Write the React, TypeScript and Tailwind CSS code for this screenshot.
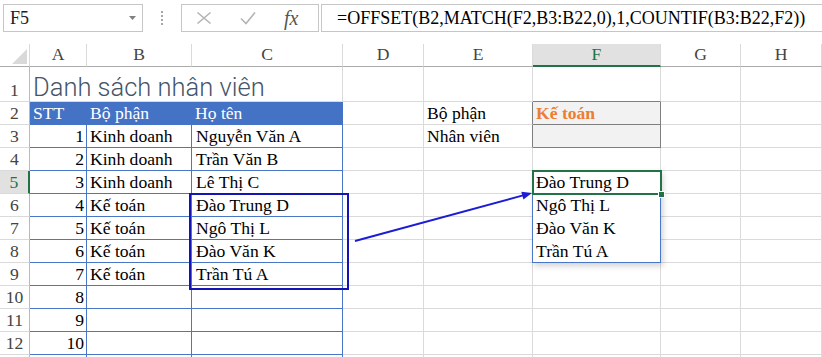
import React from "react";

const serif = "font-['Liberation_Serif',serif]";
const cell = "flex items-end pb-[1px] px-[3px] whitespace-nowrap text-[17.6px] leading-none";
const grid = "border-r border-b border-r-[#dadada] border-b-[#dadada]";
const tbl = "border-r border-b border-r-[#4a76c8] border-b-[#4a76c8]";

const people: [number, string, string][] = [
  [1, "Kinh doanh", "Nguyễn Văn A"],
  [2, "Kinh doanh", "Trần Văn B"],
  [3, "Kinh doanh", "Lê Thị C"],
  [4, "Kế toán", "Đào Trung D"],
  [5, "Kế toán", "Ngô Thị L"],
  [6, "Kế toán", "Đào Văn K"],
  [7, "Kế toán", "Trần Tú A"],
  [8, "", ""],
  [9, "", ""],
  [10, "", ""],
];

const result: Record<number, string> = {
  5: "Đào Trung D",
  6: "Ngô Thị L",
  7: "Đào Văn K",
  8: "Trần Tú A",
};

const RowHead = ({ n }: { n: number }) =>
  n === 5 ? (
    <div className="flex items-end justify-center pb-[1px] text-[17.6px] leading-none text-[#217346] bg-[#e1e1e1] border-r-2 border-b border-r-[#217346] border-b-[#dadada]">
      {n}
    </div>
  ) : (
    <div className="flex items-end justify-center pb-[1px] text-[17.6px] leading-none text-[#444] border-r border-b border-r-[#b9b9b9] border-b-[#dadada]">
      {n}
    </div>
  );

const FormulaBar = () => (
  <div className={`h-[44px] flex items-start pt-[4px] pl-[3px] ${serif}`}>
    <div className="w-[140px] h-[28px] border border-[#c6c6c6] flex items-center justify-between pl-[6px] pr-[6px]">
      <span className={`text-[18px] text-[#222] leading-none ${serif}`}>F5</span>
      <svg width="7" height="4">
        <polygon points="0,0 7,0 3.5,4" fill="#808080" />
      </svg>
    </div>
    <div className="w-[38px] h-[28px] flex flex-col items-center justify-center gap-[2px]">
      <span className="w-[2px] h-[2px] bg-[#a6a6a6]" />
      <span className="w-[2px] h-[2px] bg-[#a6a6a6]" />
      <span className="w-[2px] h-[2px] bg-[#a6a6a6]" />
      <span className="w-[2px] h-[2px] bg-[#a6a6a6]" />
    </div>
    <div className="w-[138px] h-[28px] border border-[#c6c6c6] flex items-center pl-[14px]">
      <svg width="16" height="14">
        <path d="M1.5 1.5 L14.5 12.5 M14.5 1.5 L1.5 12.5" stroke="#b4b4b4" strokeWidth="1.6" fill="none" />
      </svg>
      <svg width="16" height="14" className="ml-[28px]">
        <path d="M1 7.5 L6 12.5 L15 1.5" stroke="#b4b4b4" strokeWidth="1.6" fill="none" />
      </svg>
      <span className={`ml-[28px] italic text-[20px] leading-none text-[#555] ${serif}`}>fx</span>
    </div>
    <div
      className={`ml-[2px] flex-1 h-[28px] border border-r-0 border-[#c6c6c6] pl-[15px] flex items-center text-[18px] leading-none text-black whitespace-nowrap ${serif}`}
    >
      =OFFSET(B2,MATCH(F2,B3:B22,0),1,COUNTIF(B3:B22,F2))
    </div>
  </div>
);

const ColHeaders = () => (
  <>
    <div className="border-r border-b border-r-[#dadada] border-b-[#ababab]">
      <svg width="30" height="23">
        <polygon points="12,20 27,20 27,5" fill="#d9d9d9" />
      </svg>
    </div>
    {["A", "B", "C", "D", "E", "F", "G", "H"].map((c) =>
      c === "F" ? (
        <div
          key={c}
          className="flex items-end justify-center pb-[1px] text-[17.6px] leading-none text-[#217346] bg-[#e1e1e1] border-r border-b-2 border-r-[#dadada] border-b-[#217346]"
        >
          {c}
        </div>
      ) : (
        <div
          key={c}
          className="flex items-end justify-center pb-[2px] text-[17.6px] leading-none text-[#444] border-r border-b border-r-[#dadada] border-b-[#ababab]"
        >
          {c}
        </div>
      )
    )}
  </>
);

export default function App() {
  return (
    <div className="w-[822px] h-[357px] overflow-hidden bg-white text-black">
      <FormulaBar />
      <div
        className={`relative grid grid-cols-[30px_57px_105px_151px_81px_109px_128px_80px_81px] grid-rows-[23px_35px_repeat(12,23px)] ${serif}`}
      >
        <ColHeaders />

        {/* row 1 */}
        <RowHead n={1} />
        <div className="col-span-3 flex items-end pb-[1px] px-[3px] whitespace-nowrap border-r border-b border-r-[#dadada] border-b-[#dadada] font-['Roboto',sans-serif] font-light text-[25.5px] leading-none text-[#44546a]">
          Danh sách nhân viên
        </div>
        <div className={grid} />
        <div className={grid} />
        <div className="border-r border-b border-r-[#dadada] border-b-[#7f7f7f]" />
        <div className={grid} />
        <div className={grid} />

        {/* row 2 */}
        <RowHead n={2} />
        <div className={`${cell} text-white bg-[#4472c4] border-r border-b border-r-[#4472c4] border-b-[#4472c4]`}>STT</div>
        <div className={`${cell} text-white bg-[#4472c4] border-r border-b border-r-[#4472c4] border-b-[#4472c4]`}>Bộ phận</div>
        <div className={`${cell} text-white bg-[#4472c4] border-r border-b border-r-[#4472c4] border-b-[#4472c4]`}>Họ tên</div>
        <div className={grid} />
        <div className={`${cell} border-r border-b border-r-[#7f7f7f] border-b-[#dadada]`}>Bộ phận</div>
        <div className={`${cell} font-bold text-[#ed7d31] bg-[#f2f2f2] border-r border-b border-r-[#7f7f7f] border-b-[#7f7f7f]`}>
          Kế toán
        </div>
        <div className={grid} />
        <div className={grid} />

        {/* rows 3..12 */}
        {people.map(([no, dept, name], i) => {
          const r = i + 3;
          return (
            <React.Fragment key={r}>
              <RowHead n={r} />
              <div className={`${cell} justify-end pr-[2px] ${tbl}`}>{no}</div>
              <div className={`${cell} ${tbl}`}>{dept}</div>
              <div className={`${cell} pl-[4px] ${tbl}`}>{name}</div>
              <div className={grid} />
              {r === 3 ? (
                <div className={`${cell} border-r border-b border-r-[#7f7f7f] border-b-[#dadada]`}>Nhân viên</div>
              ) : (
                <div className={grid} />
              )}
              {r === 3 ? (
                <div className="bg-[#f2f2f2] border-r border-b border-r-[#7f7f7f] border-b-[#7f7f7f]" />
              ) : r >= 5 && r <= 7 ? (
                <div className={`${cell} border-r border-b border-r-[#dadada] border-b-white`}>{result[r]}</div>
              ) : (
                <div className={`${cell} ${grid}`}>{result[r] ?? ""}</div>
              )}
              <div className={grid} />
              <div className={grid} />
            </React.Fragment>
          );
        })}

        {/* row 13, only its top edge shows */}
        <div className="border-r border-b border-r-[#b9b9b9] border-b-[#dadada]" />
        <div className={tbl} />
        <div className={tbl} />
        <div className={tbl} />
        <div className={grid} />
        <div className={grid} />
        <div className={grid} />
        <div className={grid} />
        <div className={grid} />

        {/* spill range F5:F8 */}
        <div className="absolute left-[532px] top-[126px] w-[129px] h-[93px] border border-[#4a76c8] shadow-[2px_3px_6px_rgba(0,0,0,0.18)] pointer-events-none" />
        {/* active cell F5 */}
        <div className="absolute left-[532px] top-[126px] w-[130px] h-[25px] border-2 border-[#217346] pointer-events-none" />
        <div className="absolute left-[658px] top-[147px] w-[7px] h-[7px] bg-[#217346] border border-white pointer-events-none" />
        {/* highlight box C6:C9 */}
        <div className="absolute left-[189px] top-[149px] w-[160px] h-[97px] border-2 border-[#1414b4] pointer-events-none" />
        {/* arrow */}
        <svg className="absolute left-0 top-0 pointer-events-none" width="822" height="313">
          <line x1="355" y1="197" x2="523" y2="151.4" stroke="#1c1cd6" strokeWidth="2" />
          <polygon points="532,149 523.4,155.5 521.3,147.8" fill="#1c1cd6" />
        </svg>
      </div>
    </div>
  );
}
